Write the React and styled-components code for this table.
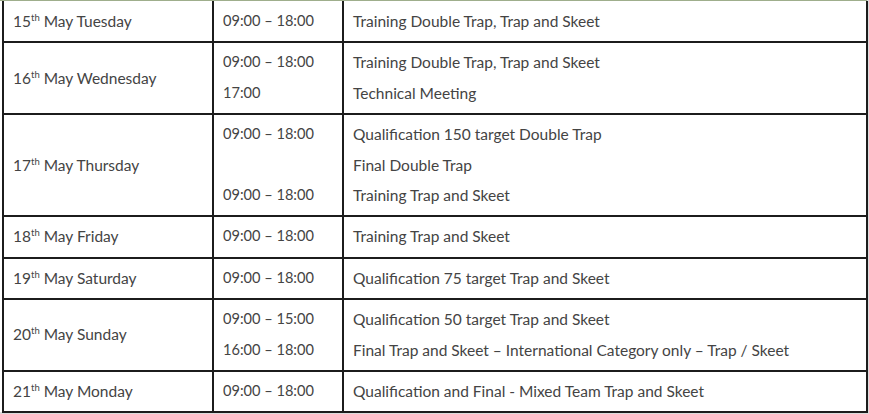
import styled, { createGlobalStyle } from 'styled-components';

const GlobalStyle = createGlobalStyle`
  html, body {
    margin: 0;
    padding: 0;
    background: #ffffff;
  }
  body {
    font-family: Lato, "Open Sans", sans-serif;
  }
`;

const Page = styled.div`
  width: 869px;
  height: 414px;
  background: #dcdcdc;
  overflow: hidden;
`;

const Sheet = styled.div`
  width: 867px;
  height: 412px;
  background: #ffffff;
  border-top: 1px solid #9fae8c;
  box-sizing: border-box;
  padding-left: 2px;
`;

const Table = styled.table`
  border-collapse: collapse;
  table-layout: fixed;
  width: 864px;
  color: #444444;
  font-size: 15.5px;
`;

const Cell = styled.td`
  border: 2px solid #1c1c1c;
  border-top: ${({ $first }) => ($first ? 'none' : '2px solid #1c1c1c')};
  padding: ${({ $first }) => ($first ? '5px' : '4px')} 9px 5px 9px;
  vertical-align: middle;
  overflow: hidden;
  font-size: ${({ $small }) => ($small ? '14.6px' : 'inherit')};
`;

const Line = styled.div`
  height: 30.4px;
  line-height: 30.4px;
  white-space: nowrap;
`;

const Sup = styled.sup`
  font-size: 9.5px;
  vertical-align: 6px;
  line-height: 0;
`;

const rows = [
  { day: '15', name: 'May Tuesday', times: ['09:00 – 18:00'], events: ['Training Double Trap, Trap and Skeet'] },
  {
    day: '16',
    name: 'May Wednesday',
    times: ['09:00 – 18:00', '17:00'],
    events: ['Training Double Trap, Trap and Skeet', 'Technical Meeting'],
  },
  {
    day: '17',
    name: 'May Thursday',
    times: ['09:00 – 18:00', '', '09:00 – 18:00'],
    events: ['Qualification 150 target Double Trap', 'Final Double Trap', 'Training Trap and Skeet'],
  },
  { day: '18', name: 'May Friday', times: ['09:00 – 18:00'], events: ['Training Trap and Skeet'] },
  { day: '19', name: 'May Saturday', times: ['09:00 – 18:00'], events: ['Qualification 75 target Trap and Skeet'] },
  {
    day: '20',
    name: 'May Sunday',
    times: ['09:00 – 15:00', '16:00 – 18:00'],
    events: [
      'Qualification 50 target Trap and Skeet',
      'Final Trap and Skeet – International Category only – Trap / Skeet',
    ],
  },
  {
    day: '21',
    name: 'May Monday',
    times: ['09:00 – 18:00'],
    events: ['Qualification and Final - Mixed Team Trap and Skeet'],
  },
];

export default function App() {
  return (
    <Page>
      <GlobalStyle />
      <Sheet>
        <Table>
          <colgroup>
            <col style={{ width: 210 }} />
            <col style={{ width: 130 }} />
            <col style={{ width: 524 }} />
          </colgroup>
          <tbody>
            {rows.map((r, i) => (
              <tr key={r.day}>
                <Cell $first={i === 0}>
                  <Line>
                    {r.day}
                    <Sup>th</Sup> {r.name}
                  </Line>
                </Cell>
                <Cell $first={i === 0} $small>
                  {r.times.map((t, j) => (
                    <Line key={j}>{t}</Line>
                  ))}
                </Cell>
                <Cell $first={i === 0}>
                  {r.events.map((e, j) => (
                    <Line key={j}>{e}</Line>
                  ))}
                </Cell>
              </tr>
            ))}
          </tbody>
        </Table>
      </Sheet>
    </Page>
  );
}
